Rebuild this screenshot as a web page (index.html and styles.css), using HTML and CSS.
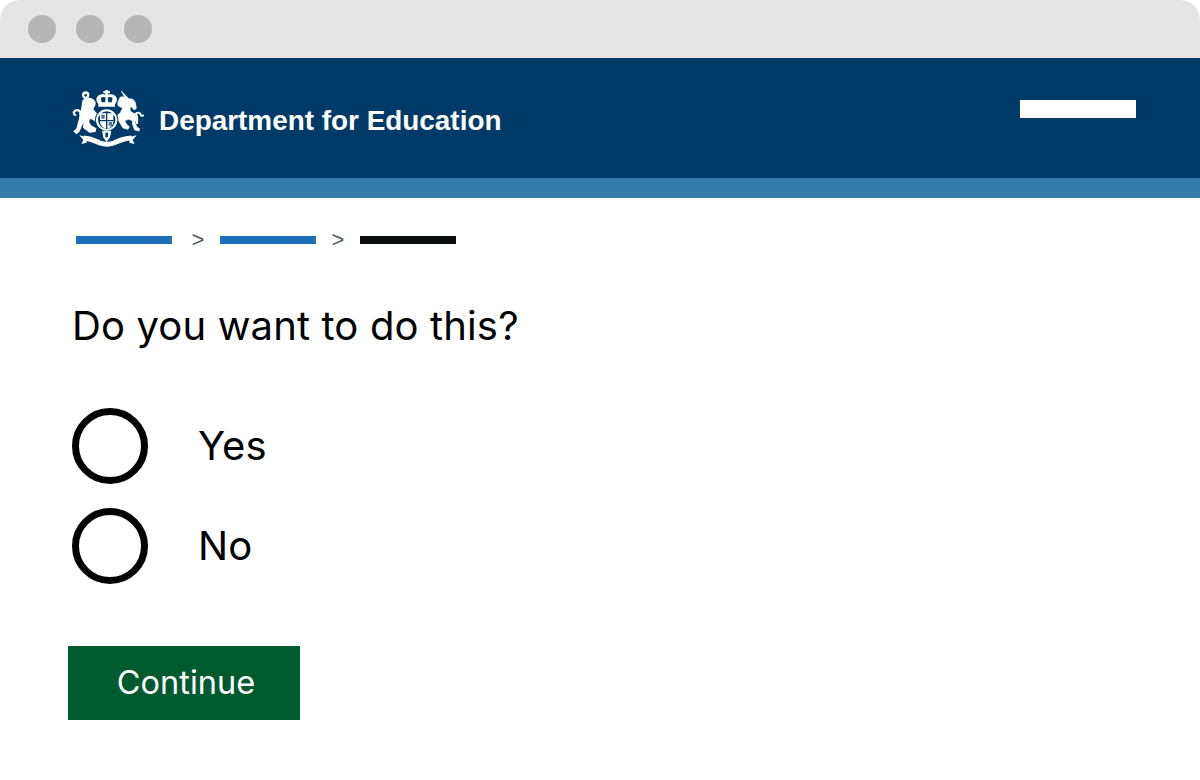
FILE: index.html
```html
<!DOCTYPE html>
<html lang="en">
<head>
    <meta charset="UTF-8">
    <title>Do you want to do this?</title>
    <link rel="stylesheet" href="styles.css">
</head>
<body>
<div class="chrome">
    <span class="dot"></span>
    <span class="dot"></span>
    <span class="dot"></span>
</div>
<header class="masthead">
    <div class="brand">
        <svg class="crest" viewBox="36 28 216 177" width="72" height="59" aria-hidden="true">
            <!-- motto ribbon -->
            <path d="M72 172c24 2 36 10 48 15 12 4 30 4 42 0 14-6 28-14 52-15" fill="none" stroke="#fff" stroke-width="15"/>
            <path d="M58 164l20 4 2 18-16 4 6-12zM230 164l-20 4-2 18 16 4-6-12z" fill="#fff"/>
            <!-- lion -->
            <circle cx="77" cy="43" r="11" fill="#fff"/>
            <circle cx="77" cy="44" r="4" fill="#003a69"/>
            <path d="M68 66c0-9 10-15 20-13 10 1 18 8 17 17-1 7-5 10-7 13l4 9 8 8-3 22-8-6-10-4-4 12 8 12 14 8-2 8-16 2-18-14 2-20-6 8-10 24-8 6-6-6 8-8 8-30 6-26z" fill="#fff" stroke="#fff" stroke-width="4"/>
            <path d="M62 96c-4-10-16-10-20-2-2 6 2 10 6 8" fill="none" stroke="#fff" stroke-width="7"/>
            <path d="M60 96c3 10 2 24-3 34" fill="none" stroke="#fff" stroke-width="6"/>
            <!-- unicorn -->
            <path d="M184 31l23 24c10-2 17 4 19 12l3 16-7 5-5-8-7-1 1 13 14 8 5 14-5 12 6 14 8 4-2 7-13-3-7-18 1-10-12-4-12 4 5 10 9 8-4 8-15-4-13-22-12-4-4-9 12-3 9-8 7-14-13-6-2-8 7-18 8-2 6 2z" fill="#fff" stroke="#fff" stroke-width="2"/>
            <path d="M226 100c6-6 14-4 16 2 1 5 8 4 9 0M228 100c6 10 4 20 2 30" fill="none" stroke="#fff" stroke-width="6"/>
            <!-- shield and garter -->
            <circle cx="140" cy="118" r="35" fill="#003a69"/>
            <circle cx="140" cy="118" r="32" fill="#fff"/>
            <circle cx="140" cy="118" r="26" fill="#003a69"/>
            <path d="M120 98h40v24c0 13-10 20-20 24-10-4-20-11-20-24z" fill="#fff"/>
            <path d="M138 98h4v48h-4zM120 118h40v4h-40z" fill="#003a69"/>
            <path d="M124 102h10v12h-10zM146 124h10v11h-10z" fill="#003a69" opacity=".7"/>
            <path d="M126 150h28l-4 20-10 14-10-14z" fill="#fff"/>
            <path d="M136 156h8v14h-8z" fill="#003a69"/>
            <!-- crown -->
            <path d="M136 24h8v7h6v7h-6v4c12-4 26 2 27 14 0 6-3 10-6 15v7h-50v-7c-3-5-6-9-6-15 1-12 15-18 27-14v-4h-6v-7h6z" fill="#fff"/>
            <path d="M122 52c6-4 12-4 15-1l-2 14h-10zM158 52c-6-4-12-4-15-1l2 14h10z" fill="#003a69"/>
        </svg>
        <span class="brand-name">Department for Education</span>
    </div>
    <span class="nav-stub"></span>
</header>
<div class="band"></div>
<main class="content">
    <nav class="crumbs">
        <span class="crumb"></span>
        <span class="sep">&gt;</span>
        <span class="crumb"></span>
        <span class="sep">&gt;</span>
        <span class="crumb crumb-current"></span>
    </nav>
    <h1 class="question">Do you want to do this?</h1>
    <div class="options">
        <label class="option"><span class="radio"></span><span class="option-text">Yes</span></label>
        <label class="option"><span class="radio"></span><span class="option-text">No</span></label>
    </div>
    <button class="continue">Continue</button>
</main>
</body>
</html>
```

FILE: styles.css
```css
body,div,h1,nav,main,header{margin:0;padding:0;}
html,body{height:100%;overflow:hidden;}
body{background:#fff;color:#000;font-family:Inter,"Liberation Sans",sans-serif;}

.chrome{display:flex;align-items:center;gap:20px;height:58px;padding-left:28px;background:#e5e5e5;border-radius:20px 20px 0 0;box-sizing:border-box;}
.dot{width:28px;height:28px;border-radius:50%;background:#b5b5b5;}

.masthead{display:flex;justify-content:space-between;height:120px;padding:0 64px 0 72px;background:#003a69;box-sizing:border-box;}
.brand{display:flex;align-items:center;gap:15px;height:122px;}
.crest{display:block;flex:none;}
.brand-name{margin-top:4px;color:#fff;font:700 27.900px/32px "Liberation Sans",Arial,sans-serif;}
.nav-stub{width:116px;height:18px;margin-top:42px;background:#fff;}
.band{height:20px;background:#347ca9;}

.content{padding:38px 0 0 68px;}
.crumbs{display:flex;align-items:center;height:8px;padding-left:8px;}
.crumb{width:96px;height:8px;background:#1d70b8;}
.crumb-current{background:#0b0c0c;}
.sep{box-sizing:border-box;width:48px;padding-left:4px;text-align:center;color:#505a5f;font:22px/8px "Liberation Sans",Arial,sans-serif;}
.sep:nth-child(4){width:44px;padding-left:0;}

.question{margin:56px 0 0 4px;font-size:40px;line-height:52px;font-weight:400;letter-spacing:.14px;}

.options{display:flex;flex-direction:column;gap:24px;margin:56px 0 0 4px;}
.option{display:flex;align-items:center;gap:50px;height:76px;font-size:40px;}
.option-text{margin-bottom:2px;}
.radio{width:76px;height:76px;border:7px solid #000;border-radius:50%;box-sizing:border-box;}

.continue{display:block;width:232px;height:74px;margin-top:62px;padding:0 0 2px 4px;border:0;background:#005a30;color:#fff;font:400 32.500px Inter,"Liberation Sans",sans-serif;}
```
